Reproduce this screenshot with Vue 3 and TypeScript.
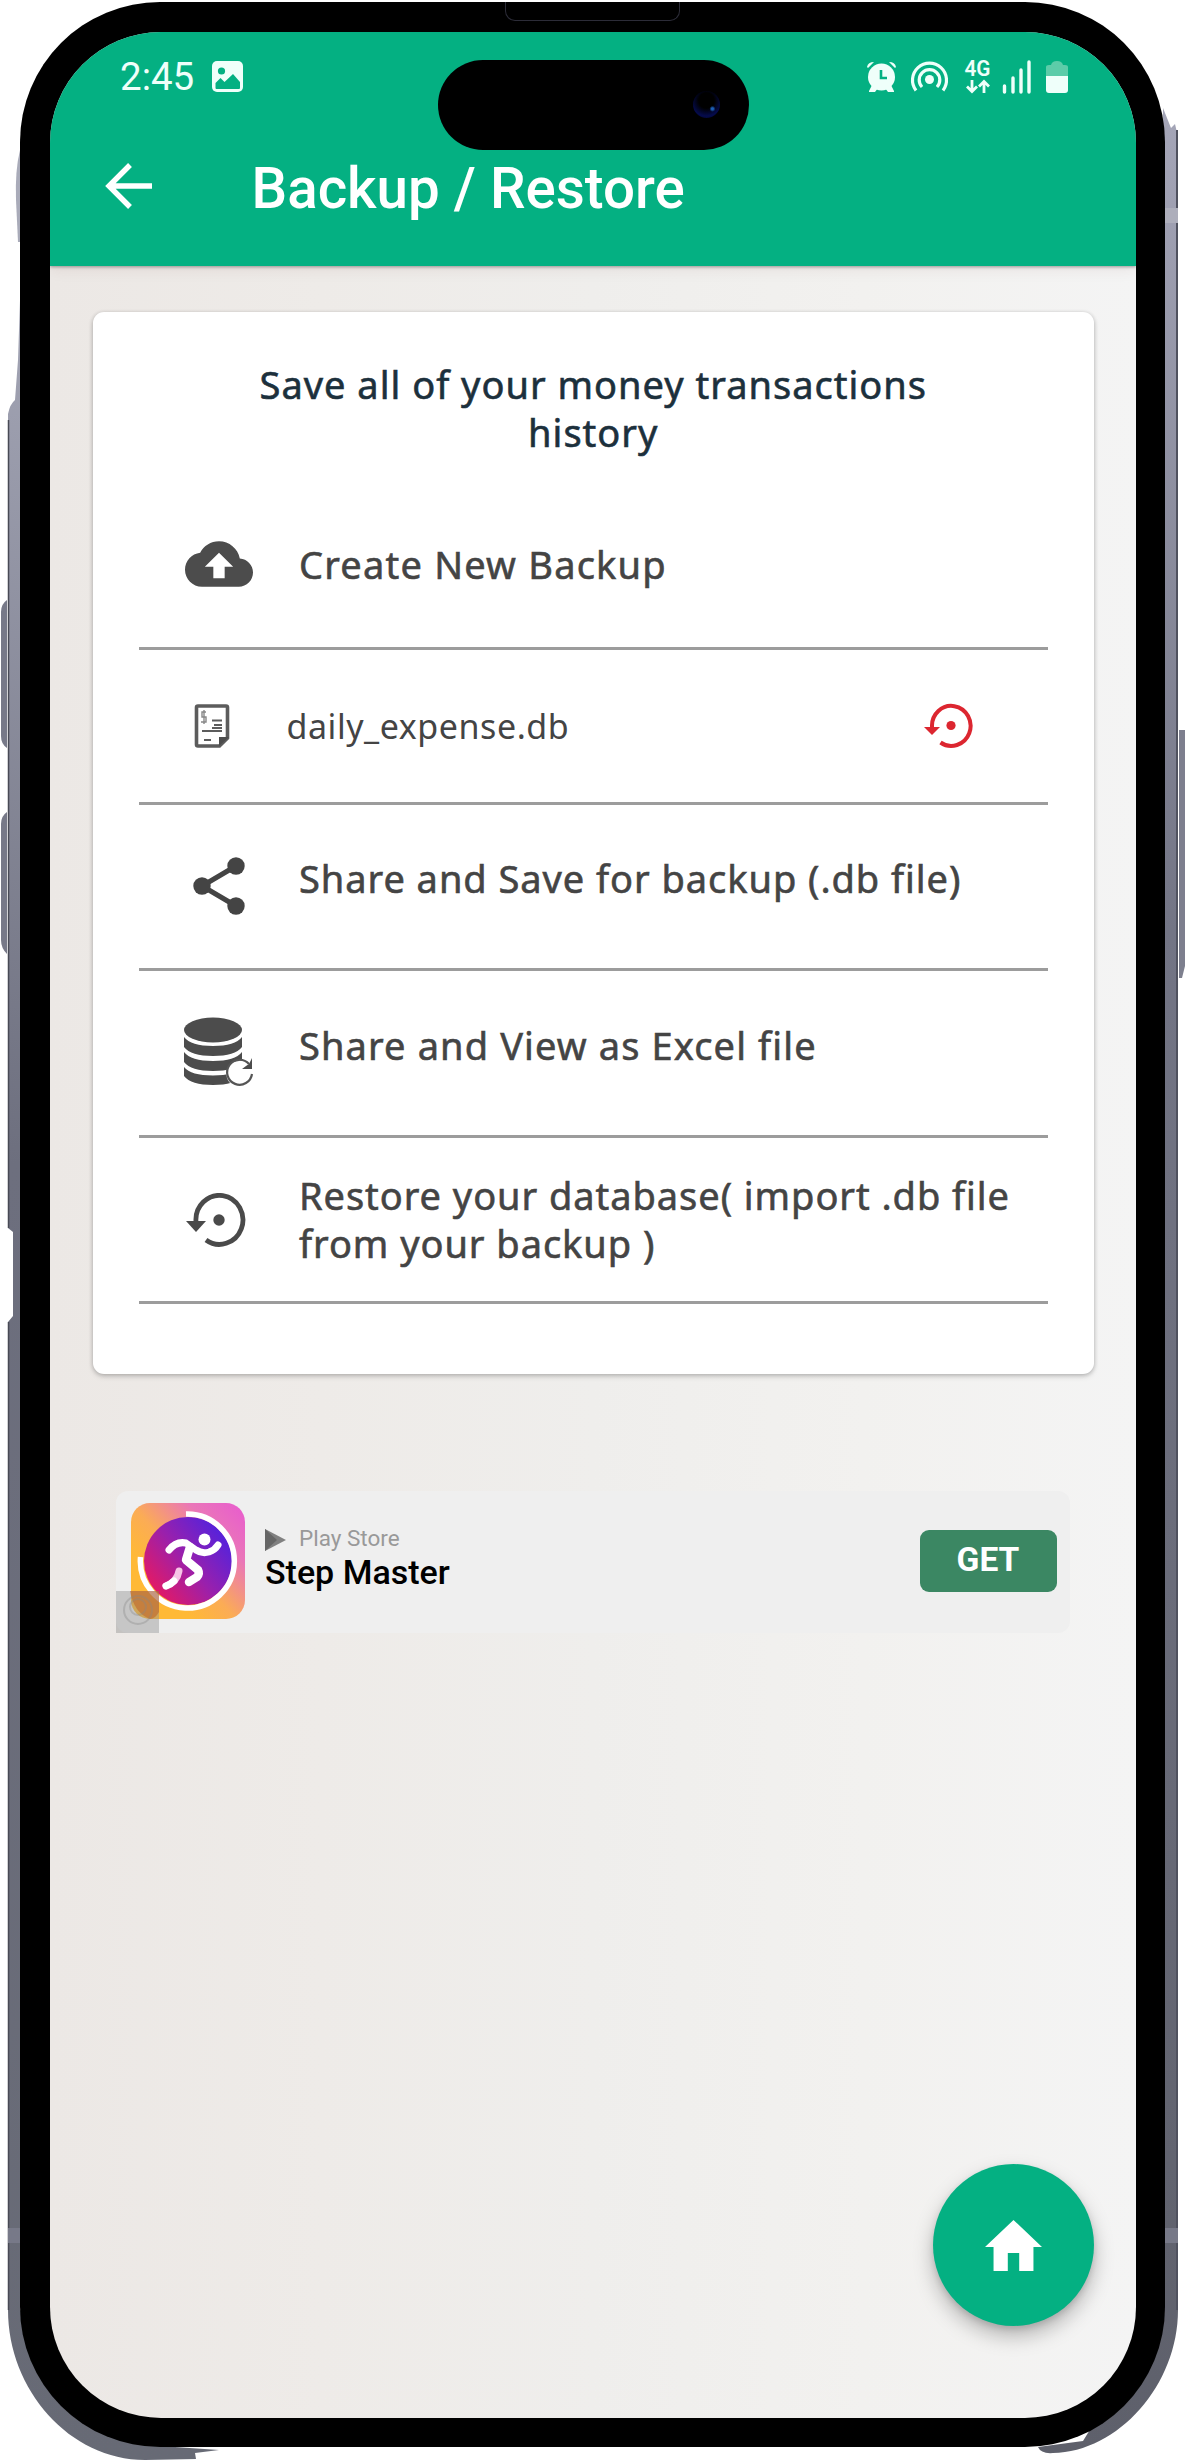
<script setup lang="ts">
interface Row {
  id: string
  lines: string[]
  icon: 'cloud' | 'doc' | 'share' | 'db' | 'restore'
  height: number
}

const rows: Row[] = [
  { id: 'create', lines: ['Create New Backup'], icon: 'cloud', height: 169 },
  { id: 'file', lines: ['daily_expense.db'], icon: 'doc', height: 155 },
  { id: 'share-db', lines: ['Share and Save for backup (.db file)'], icon: 'share', height: 166 },
  { id: 'share-xls', lines: ['Share and View as Excel file'], icon: 'db', height: 167 },
  { id: 'restore', lines: ['Restore your database( import .db file', 'from your backup )'], icon: 'restore', height: 166 },
]
</script>

<template>
  <div class="stage">
    <svg class="rails" viewBox="0 0 1186 2463" width="1186" height="2463">
      <defs>
        <linearGradient id="metalL" x1="0" y1="0" x2="0" y2="1">
          <stop offset="0" stop-color="#a3a5b5" />
          <stop offset="0.4" stop-color="#6d6f7e" />
          <stop offset="1" stop-color="#676a75" />
        </linearGradient>
        <linearGradient id="metalR" x1="0" y1="0" x2="0" y2="1">
          <stop offset="0" stop-color="#a5a6b8" />
          <stop offset="0.35" stop-color="#737585" />
          <stop offset="1" stop-color="#5e606b" />
        </linearGradient>
      </defs>
      <path d="M20 150q-5 20-4 50l2 42h2z" fill="#a9abb9" />
      <path d="M20 300l-2 60-3 40q-5 4-7 14V1228l5 4v84l-5 6V2310C8 2390 70 2460 145 2460L196 2459l-1-6 24-3-44-3L20 2310z" fill="url(#metalL)" />
      <path d="M8.500 420V1228M8.500 1322V2310" stroke="#484a55" stroke-width="1.500" fill="none" />
      <path d="M1163 108l8 20 4-4q3 10 3 30V2310c0 75-60 142-125 143q-12 1-15-6l45-6L1164 2310z" fill="url(#metalR)" />
      <path d="M1177 130V2310" stroke="#50525f" stroke-width="2" />
      <path d="M7 600q-6 4-6 12v124q0 8 6 12zM7 812q-6 4-6 12v116q0 8 6 14z" fill="#777988" />
      <path d="M1179 730h6V966l-3 12h-3z" fill="#7d7f8e" />
      <path d="M8 2228h12v15H8zM1165 2228h13v15h-13z" fill="#777988" />
      <path d="M1165 208h13v15h-13z" fill="#adaebb" />
    </svg>

    <div class="body">
      <div class="speaker"></div>
      <div class="screen">
        <header class="header">
          <div class="status">
            <span class="clock">2:45</span>
            <svg class="photo" viewBox="0 0 31 31" width="31" height="31">
              <rect width="31" height="31" rx="5" fill="#effffa" />
              <circle cx="9.500" cy="10" r="3.600" fill="#04b082" />
              <path d="M3.500 27v-5l5-5 4 4L21 13l7 8v6q0 1-1 1H4.500q-1 0-1-1z" fill="#04b082" />
            </svg>
            <span class="spacer"></span>
            <svg viewBox="0 -8 202 44" width="202" height="44" class="sys">
              <g fill="#effffa">
                <circle cx="15.500" cy="18" r="13.500" />
                <path d="M1 8q1-5 7-5L2 9zM30 8q-1-5-7-5l6 6zM3 32l3-6 6 3-3 4H3zM28 32l-3-6-6 3 3 4h6z" />
              </g>
              <path d="M15 11v8h6" fill="none" stroke="#04b082" stroke-width="2.600" />
              <g fill="none" stroke="#effffa" stroke-width="3.200">
                <path d="M50 31.500A17 17 0 1 1 77 31.500" />
                <path d="M56 28A10.300 10.300 0 1 1 71 28" />
              </g>
              <circle cx="63.500" cy="20.500" r="4.500" fill="#effffa" />
              <text x="98.500" y="16.500" font-size="21.500" font-weight="600" font-family="Roboto, sans-serif" textLength="26" lengthAdjust="spacingAndGlyphs" fill="#effffa">4G</text>
              <path d="M106 21v11M101 27.500l5 5 5-5M118 34V23M113 27.500l5-5 5 5" fill="none" stroke="#effffa" stroke-width="2.800" />
              <path d="M138.500 33v-6M147 33V19M155 33V11M163 33V3" stroke="#effffa" stroke-width="3.400" stroke-linecap="round" />
              <path d="M180 17V8q0-2 3-2h2q1-4 6-4t6 4h2q3 0 3 2v9z" fill="#5ccca9" />
              <path d="M180 17h22v14q0 3-3 3h-16q-3 0-3-3z" fill="#effffa" />
            </svg>
          </div>
          <div class="toolbar">
            <svg viewBox="0 0 48 46" width="48" height="46" fill="none" stroke="#fff" stroke-width="5.400">
              <path d="M47 23H5M25 2L4 23l21 21" />
            </svg>
            <h1>Backup / Restore</h1>
          </div>
          <div class="island"><i></i></div>
        </header>

        <main>
          <section class="card">
            <p class="intro">Save all of your money transactions<br />history</p>
            <div v-for="row in rows" :key="row.id" class="row" :class="row.id" :style="{ height: row.height + 'px' }">
              <span class="icon">
                <svg v-if="row.icon === 'cloud'" viewBox="0 4 24 16" width="68" height="46" fill="#4c4c4c">
                  <path d="M19.350 10.040C18.670 6.590 15.640 4 12 4 9.110 4 6.600 5.640 5.350 8.040 2.340 8.360 0 10.910 0 14c0 3.310 2.690 6 6 6h13c2.760 0 5-2.240 5-5 0-2.640-2.050-4.780-4.650-4.960zM14 13v4h-4v-4H7l5-5 5 5h-3z" />
                </svg>
                <svg v-else-if="row.icon === 'doc'" viewBox="0 0 36 44" width="36" height="44">
                  <path d="M2.500 3.500q0-1.500 1.500-1.500h28q1.500 0 1.500 1.500V34l-8 8H4q-1.500 0-1.500-1.500z" fill="none" stroke="#5c5c5c" stroke-width="3.600" />
                  <path d="M25 42v-9h10z" fill="#4c4c4c" />
                  <path d="M18 16.500h10M20 21h8M8 27h20M18 24h10M10 36h7" stroke="#5c5c5c" stroke-width="2" />
                  <path d="M12 8H8v5h4v5H7M10 6v14" fill="none" stroke="#888" stroke-width="1.400" />
                </svg>
                <svg v-else-if="row.icon === 'share'" viewBox="0 0 52 58" width="52" height="58">
                  <path d="M43 9L9 29l34 20" fill="none" stroke="#444" stroke-width="5" />
                  <g fill="#444"><circle cx="43" cy="9" r="8.700" /><circle cx="9" cy="29" r="8.700" /><circle cx="43" cy="49" r="8.700" /></g>
                </svg>
                <svg v-else-if="row.icon === 'db'" viewBox="0 0 70 71" width="70" height="71">
                  <g fill="#4c4c4c">
                    <ellipse cx="29" cy="13" rx="29" ry="12.500" />
                    <path d="M0 20q7 9 29 9t29-9v10q-7 9-29 9T0 30z" />
                    <path d="M0 35q7 9 29 9t29-9v10q-7 9-29 9T0 45z" />
                    <path d="M0 50q7 8.500 29 8.500t29-8.500v9q-7 9-29 9T0 59z" />
                  </g>
                  <circle cx="56" cy="57" r="13.500" fill="#fff" />
                  <path d="M65 47A12.500 12.500 0 1 0 68 57" fill="none" stroke="#555" stroke-width="2.200" />
                  <path d="M68 41v11H58l4-3 3-2z" fill="#4c4c4c" />
                </svg>
                <svg v-else viewBox="0 0 60 54" width="60" height="54">
                  <path d="M10 29A23.500 24.500 0 1 1 20 47" fill="none" stroke="#4a4a4a" stroke-width="4.800" />
                  <path d="M0 28h20L10 39z" fill="#4a4a4a" />
                  <circle cx="33" cy="27" r="5.700" fill="#4a4a4a" />
                </svg>
              </span>
              <span class="label"><span v-for="line in row.lines" :key="line" class="line">{{ line }}</span></span>
              <svg v-if="row.id === 'file'" class="undo" viewBox="0 0 49 45" width="49" height="45">
                <path d="M8 24A19.300 20 0 1 1 16.500 39.500" fill="none" stroke="#dc2630" stroke-width="4" />
                <path d="M0 24h16L8 32z" fill="#dc2630" />
                <circle cx="27" cy="22.500" r="4.600" fill="#dc2630" />
              </svg>
            </div>
          </section>

          <section class="ad">
            <div class="app-icon">
              <svg viewBox="0 0 114 116" width="114" height="116">
                <defs>
                  <linearGradient id="tile" x1="1" y1="0" x2="0.250" y2="0.700">
                    <stop offset="0" stop-color="#e85ad0" />
                    <stop offset="0.350" stop-color="#ea76b8" />
                    <stop offset="0.720" stop-color="#fbac55" />
                    <stop offset="1" stop-color="#ffb936" />
                  </linearGradient>
                  <linearGradient id="disc" x1="0.900" y1="0.250" x2="0.150" y2="0.850">
                    <stop offset="0" stop-color="#5a22d8" />
                    <stop offset="0.500" stop-color="#9a20ac" />
                    <stop offset="1" stop-color="#e01a68" />
                  </linearGradient>
                </defs>
                <rect width="114" height="116" rx="19" fill="url(#tile)" />
                <circle cx="57" cy="58" r="44" fill="url(#disc)" />
                <path d="M55 11A47 47 0 1 1 9.500 54" fill="none" stroke="#fff" stroke-width="5.500" />
                <circle cx="73.500" cy="36.500" r="6" fill="#fff" />
                <g fill="none" stroke="#fff" stroke-linecap="round" stroke-linejoin="round">
                  <path d="M38 47q7-9 17-7l10 7q6 4 13 2 6-2 9-7" stroke-width="7" />
                  <path d="M59 44l-4 13 12 10q2 4-1 7l-8 5" stroke-width="8.500" />
                  <path d="M35 83q11-4 13-15" stroke-width="7" stroke="#f6c5e6" />
                  <path d="M35 83q5-2 8-5" stroke-width="7" />
                </g>
              </svg>
              <span class="badge"><svg viewBox="0 0 43 42" width="43" height="42"><path d="M14 0h29v21q-4 7-9 7-16-6-20-28z" fill="#b8501c" fill-opacity="0.450" /><g fill="none" stroke="#888" stroke-opacity="0.350" stroke-width="2"><circle cx="22" cy="19" r="14" /><circle cx="22" cy="16" r="8" /></g></svg></span>
            </div>
            <div class="ad-text">
              <span class="store">
                <svg viewBox="0 0 21 22" width="21" height="22"><path d="M0 0l21 11L0 22z" fill="#808080" /><path d="M0 0l12 11L0 22z" fill="#666" /></svg>
                <span>Play Store</span>
              </span>
              <strong>Step Master</strong>
            </div>
            <button class="get">GET</button>
          </section>
        </main>

        <button class="fab" aria-label="Home">
          <svg viewBox="2 3 20 17" width="57" height="51" preserveAspectRatio="none" fill="#fff"><path d="M10 20v-6h4v6h5v-8h3L12 3 2 12h3v8z" /></svg>
        </button>
      </div>
    </div>
  </div>
</template>

<style>
body {
  margin: 0;
  background: #fff;
}
</style>

<style scoped>
* {
  box-sizing: border-box;
}
.stage {
  position: relative;
  width: 1186px;
  height: 2463px;
  padding: 2px 21px 0 20px;
  overflow: hidden;
  background: #fff;
  font-family: Roboto, sans-serif;
}
.rails {
  position: absolute;
  left: 0;
  top: 0;
}
.body {
  position: relative;
  height: 2445px;
  padding: 29.500px 29.500px 29px 30px;
  border-radius: 140px;
  background: #000;
}
.speaker {
  position: absolute;
  left: 485px;
  top: 0;
  width: 175px;
  height: 19px;
  border: 1px solid #2c2c38;
  border-top: 0;
  border-radius: 0 0 10px 10px;
}
.screen {
  position: relative;
  height: 100%;
  overflow: hidden;
  border-radius: 111px;
  background: linear-gradient(90deg, #ece8e5 0%, #eeebe8 25%, #efeeec 50%, #f2f1ef 75%, #f4f4f4 100%);
}
.header {
  position: relative;
  height: 234px;
  background: #04b082;
  color: #fff;
  box-shadow: 0 1px 3px rgba(0, 0, 0, 0.35), 0 4px 14px rgba(80, 0, 0, 0.07);
}
.status {
  display: flex;
  align-items: flex-start;
  height: 64px;
  padding: 27px 68px 0 70px;
}
.clock {
  width: 77px;
  margin-right: 15px;
  font-size: 38.500px;
  line-height: 35px;
  color: #effffa;
}
.photo {
  margin-top: 2px;
}
.sys {
  margin-top: -8px;
}
.spacer {
  flex: 1;
}
.toolbar {
  display: flex;
  align-items: center;
  height: 70px;
  margin-top: 56px;
  padding-left: 55px;
}
.toolbar svg {
  margin-top: -2px;
}
h1 {
  margin: 5px 0 0 98.500px;
  font-size: 56.500px;
  font-weight: 500;
  line-height: 70px;
  white-space: nowrap;
}
.island {
  position: absolute;
  left: 387.500px;
  top: 28.500px;
  width: 311px;
  height: 90px;
  border-radius: 45px;
  background: #000;
}
.island i {
  position: absolute;
  right: 29px;
  top: 31px;
  width: 27px;
  height: 27px;
  border-radius: 50%;
  background: radial-gradient(circle at 72% 66%, #1c5fb8 0 1px, transparent 3px), radial-gradient(circle at 50% 35%, #000 35%, #050b4c 70%, #02031a 100%);
}
main {
  padding: 46px 42px 0 43px;
}
.card {
  height: 1062px;
  padding: 48px 46px 0 46px;
  border-radius: 11px;
  background: #fff;
  box-shadow: 0 1px 4px rgba(0, 0, 0, 0.24), 0 3px 6px rgba(0, 0, 0, 0.09);
  font-family: "Noto Sans", sans-serif;
  color: #444;
}
.intro {
  height: 121px;
  margin: 0;
  text-align: center;
  font-size: 38px;
  line-height: 48px;
  letter-spacing: 1px;
  color: #1c303c;
  -webkit-text-stroke: 0.600px #1c303c;
}
.row {
  display: flex;
  align-items: center;
  border-bottom: 3px solid #9c9c9c;
}
.icon {
  display: flex;
  flex: none;
  width: 115px;
  margin-left: 45px;
}
.create .icon {
  margin-left: 46px;
  width: 114px;
  padding-top: 1px;
}
.label {
  flex: 1;
  font-size: 38px;
  line-height: 48px;
  letter-spacing: 0.950px;
  white-space: nowrap;
  -webkit-text-stroke: 0.600px #444;
}
.create .label {
  letter-spacing: 1.200px;
}
.line {
  display: block;
}
.file .icon {
  margin-left: 55px;
  width: 92.500px;
}
.file .label {
  font-size: 34px;
  letter-spacing: 0.550px;
  -webkit-text-stroke: 0;
}
.undo {
  margin-right: 75px;
}
.share-db .icon {
  margin-left: 54px;
  width: 106px;
}
.share-db .label,
.share-xls .label {
  padding-bottom: 16px;
}
.share-xls .label {
  letter-spacing: 1.120px;
}
.restore .icon {
  margin-left: 47px;
  width: 113px;
  padding-top: 1px;
}
.ad {
  display: flex;
  height: 142px;
  margin: 117px 24px 0 23px;
  padding-left: 15px;
  border-radius: 12px;
  background: #efefef;
}
.app-icon {
  position: relative;
  width: 114px;
  margin-top: 12px;
}
.badge {
  position: absolute;
  left: -15px;
  top: 88px;
  width: 43px;
  height: 42px;
  background: rgba(140, 140, 140, 0.420);
}
.ad-text {
  display: flex;
  flex: 1;
  flex-direction: column;
  padding: 33px 0 0 20px;
}
.store {
  display: flex;
  align-items: center;
  gap: 13px;
  height: 28px;
  font-size: 22.500px;
  color: #999;
}
.store svg {
  margin-top: 4px;
}
.ad-text strong {
  font-size: 34px;
  font-weight: 500;
  line-height: 41px;
  color: #000;
}
.get {
  width: 137px;
  height: 62px;
  margin: 39px 13px 0 0;
  border: 0;
  border-radius: 9px;
  background: #3b8763;
  color: #fff;
  font: 700 33.500px/60px Roboto, sans-serif;
  padding: 0 0 2px;
}
.fab {
  position: absolute;
  right: 42px;
  bottom: 92px;
  display: flex;
  align-items: center;
  justify-content: center;
  width: 161px;
  height: 162px;
  border: 0;
  border-radius: 50%;
  background: #04b082;
  box-shadow: 0 10px 20px rgba(0, 0, 0, 0.26), 0 3px 6px rgba(0, 0, 0, 0.120);
}
</style>
